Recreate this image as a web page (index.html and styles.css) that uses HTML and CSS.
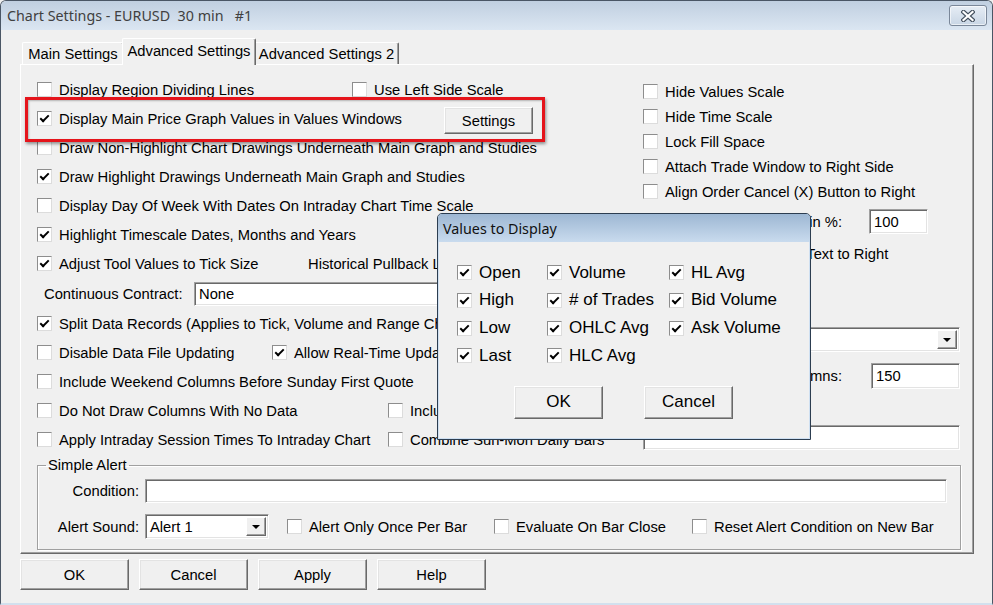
FILE: index.html
```html
<!DOCTYPE html>
<html>
<head>
<meta charset="utf-8">
<link rel="stylesheet" href="styles.css">
</head>
<body>
<div class="window">
  <div class="titlebar">
    <span class="title">Chart Settings - EURUSD  30 min   #1</span>
    <span class="close">
      <svg width="14" height="12" viewBox="0 0 14 12">
        <path d="M2.5 2 L11.5 10 M11.5 2 L2.5 10" stroke="#44505e" stroke-width="4.4" stroke-linecap="square" fill="none"/>
        <path d="M2.5 2 L11.5 10 M11.5 2 L2.5 10" stroke="#ffffff" stroke-width="2.2" stroke-linecap="square" fill="none"/>
      </svg>
    </span>
  </div>
  <div class="client">
    <div class="tabs">
      <div class="tab tab-main">Main Settings</div>
      <div class="tab tab-adv active">Advanced Settings</div>
      <div class="tab tab-adv2">Advanced Settings 2</div>
    </div>
    <div class="panel">
      <div class="cols">
        <div class="left">
          <div class="row">
            <label class="chk w315"><span class="cb"></span>Display Region Dividing Lines</label>
            <label class="chk"><span class="cb"></span>Use Left Side Scale</label>
          </div>
          <div class="row">
            <label class="chk w407"><span class="cb on"></span>Display Main Price Graph Values in Values Windows</label>
            <span class="btn btn-settings">Settings</span>
          </div>
          <div class="row">
            <label class="chk"><span class="cb"></span>Draw Non-Highlight Chart Drawings Underneath Main Graph and Studies</label>
          </div>
          <div class="row">
            <label class="chk"><span class="cb on"></span>Draw Highlight Drawings Underneath Main Graph and Studies</label>
          </div>
          <div class="row">
            <label class="chk"><span class="cb"></span>Display Day Of Week With Dates On Intraday Chart Time Scale</label>
          </div>
          <div class="row">
            <label class="chk"><span class="cb on"></span>Highlight Timescale Dates, Months and Years</label>
          </div>
          <div class="row">
            <label class="chk w271"><span class="cb on"></span>Adjust Tool Values to Tick Size</label>
            <span class="lbl">Historical Pullback Line</span>
          </div>
          <div class="row tall">
            <span class="lbl contract-label">Continuous Contract:</span>
            <span class="field contract-field">None</span>
          </div>
          <div class="row">
            <label class="chk"><span class="cb on"></span>Split Data Records (Applies to Tick, Volume and Range Charts)</label>
          </div>
          <div class="row">
            <label class="chk w235"><span class="cb"></span>Disable Data File Updating</label>
            <label class="chk"><span class="cb on"></span>Allow Real-Time Updating</label>
          </div>
          <div class="row">
            <label class="chk"><span class="cb"></span>Include Weekend Columns Before Sunday First Quote</label>
          </div>
          <div class="row">
            <label class="chk w351"><span class="cb"></span>Do Not Draw Columns With No Data</label>
            <label class="chk"><span class="cb"></span>Include Gaps</label>
          </div>
          <div class="row">
            <label class="chk w351"><span class="cb"></span>Apply Intraday Session Times To Intraday Chart</label>
            <label class="chk"><span class="cb"></span>Combine Sun-Mon Daily Bars</label>
          </div>
        </div>
        <div class="right">
          <div class="rrow"><label class="chk"><span class="cb"></span>Hide Values Scale</label></div>
          <div class="rrow"><label class="chk"><span class="cb"></span>Hide Time Scale</label></div>
          <div class="rrow"><label class="chk"><span class="cb"></span>Lock Fill Space</label></div>
          <div class="rrow"><label class="chk"><span class="cb"></span>Attach Trade Window to Right Side</label></div>
          <div class="rrow"><label class="chk"><span class="cb"></span>Align Order Cancel (X) Button to Right</label></div>
          <div class="rrow margin-row">
            <span class="lbl rlabel">Chart Right Side Margin %:</span>
            <span class="field num-field pct-field">100</span>
          </div>
          <div class="rrow text-right-row"><label class="chk"><span class="cb"></span>Display Values Scale Text to Right</label></div>
          <div class="rrow combo-row">
            <span class="field combo wide-combo"><span class="combo-text"></span><span class="drop"></span></span>
          </div>
          <div class="rrow columns-row">
            <span class="lbl rlabel">Number of Fill Space Columns:</span>
            <span class="field num-field cols-field">150</span>
          </div>
          <div class="rrow blank-row">
            <span class="field blank-field"></span>
          </div>
        </div>
      </div>
      <fieldset class="group">
        <legend>Simple Alert</legend>
        <div class="arow">
          <span class="alabel">Condition:</span>
          <span class="field cond-field"></span>
        </div>
        <div class="arow second">
          <span class="alabel">Alert Sound:</span>
          <span class="field combo sound-combo"><span class="combo-text">Alert 1</span><span class="drop"></span></span>
          <label class="chk w207 first-alert"><span class="cb"></span>Alert Only Once Per Bar</label>
          <label class="chk w198"><span class="cb"></span>Evaluate On Bar Close</label>
          <label class="chk"><span class="cb"></span>Reset Alert Condition on New Bar</label>
        </div>
      </fieldset>
    </div>
    <div class="buttons">
      <span class="btn btn-main">OK</span>
      <span class="btn btn-main">Cancel</span>
      <span class="btn btn-main">Apply</span>
      <span class="btn btn-main">Help</span>
    </div>
  </div>

  <div class="highlight"></div>

  <div class="dialog">
    <div class="dtitle">Values to Display</div>
    <div class="dgrid">
      <label class="chk dchk"><span class="cb on"></span>Open</label>
      <label class="chk dchk"><span class="cb on"></span>Volume</label>
      <label class="chk dchk"><span class="cb on"></span>HL Avg</label>
      <label class="chk dchk"><span class="cb on"></span>High</label>
      <label class="chk dchk"><span class="cb on"></span># of Trades</label>
      <label class="chk dchk"><span class="cb on"></span>Bid Volume</label>
      <label class="chk dchk"><span class="cb on"></span>Low</label>
      <label class="chk dchk"><span class="cb on"></span>OHLC Avg</label>
      <label class="chk dchk"><span class="cb on"></span>Ask Volume</label>
      <label class="chk dchk"><span class="cb on"></span>Last</label>
      <label class="chk dchk"><span class="cb on"></span>HLC Avg</label>
    </div>
    <div class="dbuttons">
      <span class="btn dbtn">OK</span>
      <span class="btn dbtn">Cancel</span>
    </div>
  </div>
</div>
</body>
</html>
```

FILE: styles.css
```css
* { box-sizing: border-box; }

html, body {
  margin: 0;
  padding: 0;
  background: #f0f0f0;
}

body {
  font-family: "Liberation Sans", Arial, sans-serif;
  font-size: 14.75px;
  color: #000;
}

.window {
  position: relative;
  width: 993px;
  height: 605px;
  border: 1px solid #4a5665;
  border-bottom: 2px solid #d2e0ee;
  border-radius: 6px 6px 0 0;
  background: #f0f0f0;
  overflow: hidden;
}

/* ---------- title bar ---------- */
.titlebar {
  height: 29px;
  display: flex;
  align-items: center;
  justify-content: space-between;
  padding: 0 5px 0 6px;
  background: linear-gradient(#c0cfe0, #dbe6f2);
}

.title {
  font-family: "Noto Sans", "Open Sans", sans-serif;
  font-size: 14.3px;
  color: #404040;
  white-space: pre;
}

.close {
  width: 38px;
  height: 21px;
  display: flex;
  align-items: center;
  justify-content: center;
  border: 1px solid #7a8799;
  border-radius: 3px;
  background: linear-gradient(#e6edf5, #c9d6e5);
  box-shadow: inset 0 0 0 1px rgba(255,255,255,0.6);
}

/* ---------- tabs ---------- */
.tabs {
  display: flex;
  align-items: flex-start;
  height: 26px;
  margin-top: 8px;
  padding-left: 21px;
}

.tab {
  height: 22px;
  margin-top: 4px;
  display: flex;
  align-items: center;
  justify-content: center;
  border-top: 1px solid #fff;
  border-left: 1px solid #fff;
  border-right: 1px solid #696969;
  box-shadow: inset -1px 0 0 #a0a0a0;
  border-radius: 2px 2px 0 0;
  background: #f0f0f0;
  white-space: nowrap;
}

.tab-main { width: 102px; }
.tab-adv { width: 130px; }
.tab-adv2 { width: 145px; }

.tab.active {
  position: relative;
  z-index: 1;
  height: 27px;
  margin: 0 -2px;
  width: 134px;
  padding-bottom: 3px;
}

/* ---------- panel ---------- */
.panel {
  margin-left: 19px;
  width: 954px;
  height: 490px;
  border-top: 1px solid #fff;
  border-left: 1px solid #fff;
  border-right: 1px solid #696969;
  border-bottom: 1px solid #696969;
  box-shadow: inset -1px -1px 0 #a0a0a0;
  padding: 10px 0 0 16px;
}

.cols {
  display: grid;
  grid-template-columns: 606px 317px;
}

.row {
  display: flex;
  align-items: center;
  height: 29px;
  white-space: nowrap;
}

.row.tall { height: 31px; }

.chk {
  display: flex;
  align-items: center;
  gap: 7px;
  white-space: nowrap;
}

.cb {
  flex: none;
  width: 15px;
  height: 15px;
  display: inline-flex;
  align-items: center;
  justify-content: center;
  background: #fff;
  border: 1px solid;
  border-color: #8d8d8d #dcdcdc #dcdcdc #8d8d8d;
}

.cb.on::after {
  content: "";
  width: 3px;
  height: 7px;
  border: solid #000;
  border-width: 0 2px 2px 0;
  transform: translate(0, -1px) rotate(45deg);
}

.w315 { width: 315px; }
.w407 { width: 407px; }
.w271 { width: 271px; }
.w235 { width: 235px; }
.w351 { width: 351px; }
.w207 { width: 207px; }
.w198 { width: 198px; }

.lbl { white-space: nowrap; }

.contract-label {
  width: 157px;
  padding-left: 7px;
}

.field {
  display: flex;
  align-items: center;
  background: #fff;
  border: 1px solid;
  border-color: #a0a0a0 #fff #fff #a0a0a0;
  box-shadow: inset 1px 1px 0 #696969, inset -1px -1px 0 #e3e3e3;
  white-space: nowrap;
}

.contract-field {
  width: 420px;
  height: 24px;
  padding-left: 4px;
}

/* ---------- right column ---------- */
.right { margin-top: 4px; }

.rrow {
  display: flex;
  align-items: center;
  height: 25px;
  white-space: nowrap;
}

.rlabel {
  flex: 1 1 0;
  min-width: 0;
  display: flex;
  justify-content: flex-end;
}

.num-field {
  flex: none;
  padding-left: 4px;
}

.margin-row { margin-top: 5px; }
.pct-field {
  width: 59px;
  height: 25px;
  margin: 0 32px 0 27px;
}

.text-right-row { margin-top: 7px; }

.combo-row { margin-top: 61px; }
.wide-combo { width: 317px; height: 25px; }

.columns-row { margin-top: 11px; height: 26px; }
.cols-field {
  width: 89px;
  height: 26px;
  margin-left: 29px;
}

.blank-row { margin-top: 36px; }
.blank-field { width: 317px; height: 25px; }

.combo {
  justify-content: space-between;
  padding: 2px;
}

.combo-text { padding-left: 2px; }

.drop {
  flex: none;
  width: 20px;
  height: 100%;
  display: flex;
  align-items: center;
  justify-content: center;
  background: #f0f0f0;
  border: 1px solid;
  border-color: #fff #696969 #696969 #fff;
  box-shadow: inset -1px -1px 0 #a0a0a0;
}

.drop::after {
  content: "";
  border-left: 4px solid transparent;
  border-right: 4px solid transparent;
  border-top: 4px solid #000;
}

/* ---------- buttons ---------- */
.btn {
  display: flex;
  align-items: center;
  justify-content: center;
  background: #f0f0f0;
  border: 1px solid;
  border-color: #fff #696969 #696969 #fff;
  box-shadow: inset -1px -1px 0 #a0a0a0, inset 1px 1px 0 #e3e3e3;
  white-space: nowrap;
}

.btn-settings {
  width: 89px;
  height: 27px;
  margin-top: 4px;
}

/* ---------- group box ---------- */
.group {
  width: 924px;
  margin: 3px 0 0 0;
  padding: 0 0 10px 0;
  border: 1px solid #a0a0a0;
  box-shadow: inset 1px 1px 0 #fff, 1px 1px 0 #fff;
}

.group legend {
  margin-left: 8px;
  padding: 0 2px;
  line-height: 17px;
  font-size: 14.75px;
}

.arow {
  display: flex;
  align-items: center;
  height: 24px;
  margin-top: 5px;
  white-space: nowrap;
}

.arow.second {
  height: 25px;
  margin-top: 11px;
}

.alabel {
  width: 101px;
  margin-right: 6px;
  text-align: right;
}

.cond-field { width: 802px; height: 24px; }

.sound-combo { width: 124px; height: 25px; }

.first-alert { margin-left: 18px; }

.buttons {
  display: flex;
  gap: 10px;
  margin-top: 5px;
  padding-left: 19px;
}

.btn-main {
  width: 109px;
  height: 31px;
}

/* ---------- highlight overlay ---------- */
.highlight {
  position: absolute;
  left: 24px;
  top: 96px;
  width: 520px;
  height: 45px;
  border: 3px solid #e5141b;
  box-shadow: 1px 2px 3px rgba(0,0,0,0.4), inset 1px 1px 2px rgba(0,0,0,0.25);
}

/* ---------- dialog ---------- */
.dialog {
  position: absolute;
  left: 436px;
  top: 212px;
  width: 374px;
  height: 227px;
  border: 1px solid #2c3d50;
  border-radius: 5px 5px 0 0;
  background: #f0f0f0;
  box-shadow: inset 0 -1px 0 #cfe0f2, inset 1px 0 0 #cfe0f2, inset -1px 0 0 #cfe0f2;
  overflow: hidden;
}

.dtitle {
  height: 28px;
  display: flex;
  align-items: center;
  padding-left: 5px;
  font-family: "Noto Sans", "Open Sans", sans-serif;
  font-size: 14.3px;
  color: #111;
  background: linear-gradient(#9db7d3, #c9dbee);
}

.dgrid {
  display: grid;
  grid-template-columns: 90px 122px 1fr;
  grid-auto-rows: 27.67px;
  padding: 17px 0 0 19px;
}

.dchk {
  font-size: 17px;
  gap: 7px;
}

.dbuttons {
  display: flex;
  gap: 41px;
  margin-top: 16px;
  padding-left: 76px;
}

.dbtn {
  width: 89px;
  height: 33px;
  font-size: 17px;
}
```
